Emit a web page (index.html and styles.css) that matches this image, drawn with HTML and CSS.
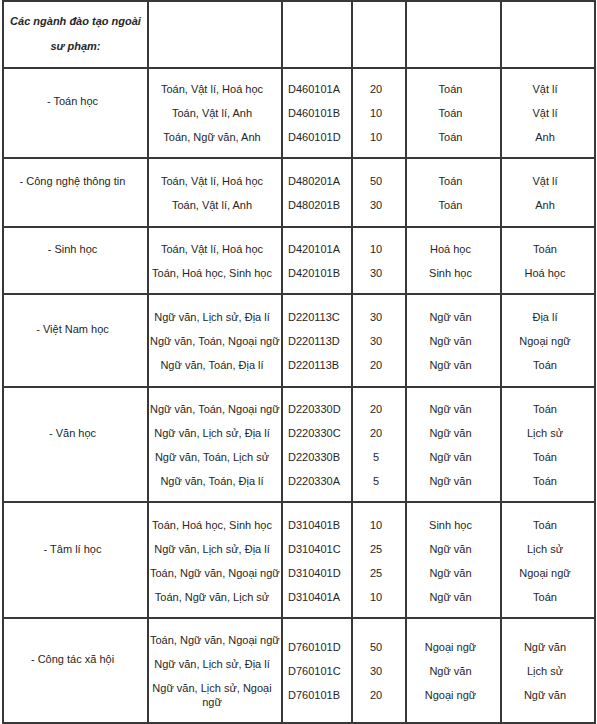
FILE: index.html
```html
<!DOCTYPE html>
<html lang="vi">
<head>
<meta charset="utf-8">
<title>Các ngành đào tạo ngoài sư phạm</title>
<link rel="stylesheet" href="styles.css">
</head>
<body>
<table class="grid">
  <colgroup>
    <col class="c1"><col class="c2"><col class="c3"><col class="c4"><col class="c5"><col class="c6">
  </colgroup>
  <tr class="head">
    <td class="title">Các ngành đào tạo ngoài sư phạm:</td>
    <td></td><td></td><td></td><td></td><td></td>
  </tr>
  <tr class="short">
    <td class="label"><p>- Toán học</p></td>
    <td class="combo"><p>Toán, Vật lí, Hoá học</p><p>Toán, Vật lí, Anh</p><p>Toán, Ngữ văn, Anh</p></td>
    <td class="code"><p>D460101A</p><p>D460101B</p><p>D460101D</p></td>
    <td><p>20</p><p>10</p><p>10</p></td>
    <td><p>Toán</p><p>Toán</p><p>Toán</p></td>
    <td><p>Vật lí</p><p>Vật lí</p><p>Anh</p></td>
  </tr>
  <tr class="tall">
    <td class="label"><p>- Công nghệ thông tin</p></td>
    <td class="combo"><p>Toán, Vật lí, Hoá học</p><p>Toán, Vật lí, Anh</p></td>
    <td class="code"><p>D480201A</p><p>D480201B</p></td>
    <td><p>50</p><p>30</p></td>
    <td><p>Toán</p><p>Toán</p></td>
    <td><p>Vật lí</p><p>Anh</p></td>
  </tr>
  <tr>
    <td class="label"><p>- Sinh học</p></td>
    <td class="combo"><p>Toán, Vật lí, Hoá học</p><p>Toán, Hoá học, Sinh học</p></td>
    <td class="code"><p>D420101A</p><p>D420101B</p></td>
    <td><p>10</p><p>30</p></td>
    <td><p>Hoá học</p><p>Sinh học</p></td>
    <td><p>Toán</p><p>Hoá học</p></td>
  </tr>
  <tr class="tall">
    <td class="label"><p>- Việt Nam học</p></td>
    <td class="combo"><p>Ngữ văn, Lịch sử, Địa lí</p><p>Ngữ văn, Toán, Ngoại ngữ</p><p>Ngữ văn, Toán, Địa lí</p></td>
    <td class="code"><p>D220113C</p><p>D220113D</p><p>D220113B</p></td>
    <td><p>30</p><p>30</p><p>20</p></td>
    <td><p>Ngữ văn</p><p>Ngữ văn</p><p>Ngữ văn</p></td>
    <td><p>Địa lí</p><p>Ngoại ngữ</p><p>Toán</p></td>
  </tr>
  <tr>
    <td class="label"><p>- Văn học</p></td>
    <td class="combo"><p>Ngữ văn, Toán, Ngoại ngữ</p><p>Ngữ văn, Lịch sử, Địa lí</p><p>Ngữ văn, Toán, Lịch sử</p><p>Ngữ văn, Toán, Địa lí</p></td>
    <td class="code"><p>D220330D</p><p>D220330C</p><p>D220330B</p><p>D220330A</p></td>
    <td><p>20</p><p>20</p><p>5</p><p>5</p></td>
    <td><p>Ngữ văn</p><p>Ngữ văn</p><p>Ngữ văn</p><p>Ngữ văn</p></td>
    <td><p>Toán</p><p>Lịch sử</p><p>Toán</p><p>Toán</p></td>
  </tr>
  <tr class="plus">
    <td class="label"><p>- Tâm lí học</p></td>
    <td class="combo"><p>Toán, Hoá học, Sinh học</p><p>Ngữ văn, Lịch sử, Địa lí</p><p>Toán, Ngữ văn, Ngoại ngữ</p><p>Toán, Ngữ văn, Lịch sử</p></td>
    <td class="code"><p>D310401B</p><p>D310401C</p><p>D310401D</p><p>D310401A</p></td>
    <td><p>10</p><p>25</p><p>25</p><p>10</p></td>
    <td><p>Sinh học</p><p>Ngữ văn</p><p>Ngữ văn</p><p>Ngữ văn</p></td>
    <td><p>Toán</p><p>Lịch sử</p><p>Ngoại ngữ</p><p>Toán</p></td>
  </tr>
  <tr>
    <td class="label"><p>- Công tác xã hội</p></td>
    <td class="combo"><p>Toán, Ngữ văn, Ngoại ngữ</p><p>Ngữ văn, Lịch sử, Địa lí</p><p class="wrap">Ngữ văn, Lịch sử, Ngoại ngữ</p></td>
    <td class="code"><p>D760101D</p><p>D760101C</p><p>D760101B</p></td>
    <td><p>50</p><p>30</p><p>20</p></td>
    <td><p>Ngoại ngữ</p><p>Ngữ văn</p><p>Ngoại ngữ</p></td>
    <td><p>Ngữ văn</p><p>Lịch sử</p><p>Ngữ văn</p></td>
  </tr>
</table>
</body>
</html>
```

FILE: styles.css
```css
html, body {
  background: #ffffff;
}

body {
  margin: 0;
  padding: 0 0 0 2px;
  font-family: "Liberation Sans", Arial, sans-serif;
  font-size: 11px;
  color: #262626;
}

.grid {
  border-collapse: separate;
  border-spacing: 0;
  table-layout: fixed;
  width: 594px;
  border: 1px solid #383838;
}

.c1 { width: 145px; }
.c2 { width: 134px; }
.c3 { width: 70px; }
.c4 { width: 54px; }
.c5 { width: 95px; }
.c6 { width: 94px; }

.grid td {
  border: 1px solid #383838;
  padding: 9px 7px 8px 1px;
  text-align: center;
  vertical-align: middle;
}

.grid p {
  margin: 0;
  padding: 5px 0;
  line-height: 14px;
  white-space: nowrap;
}

.grid p.wrap {
  white-space: normal;
}

.grid td.label {
  padding-bottom: 32px;
}

.grid td.code {
  text-align: left;
  padding-left: 5px;
  padding-right: 2px;
}

.short td {
  padding-top: 8px;
}

.tall td {
  padding-top: 10px;
  padding-bottom: 9px;
}

.tall td.label {
  padding-bottom: 33px;
}

.plus td {
  padding-top: 10px;
}

.head td {
  padding-top: 7px;
  padding-bottom: 8px;
}

.head td.title {
  font-weight: bold;
  font-style: italic;
  line-height: 25px;
  padding-left: 4px;
  padding-right: 4px;
}
```
